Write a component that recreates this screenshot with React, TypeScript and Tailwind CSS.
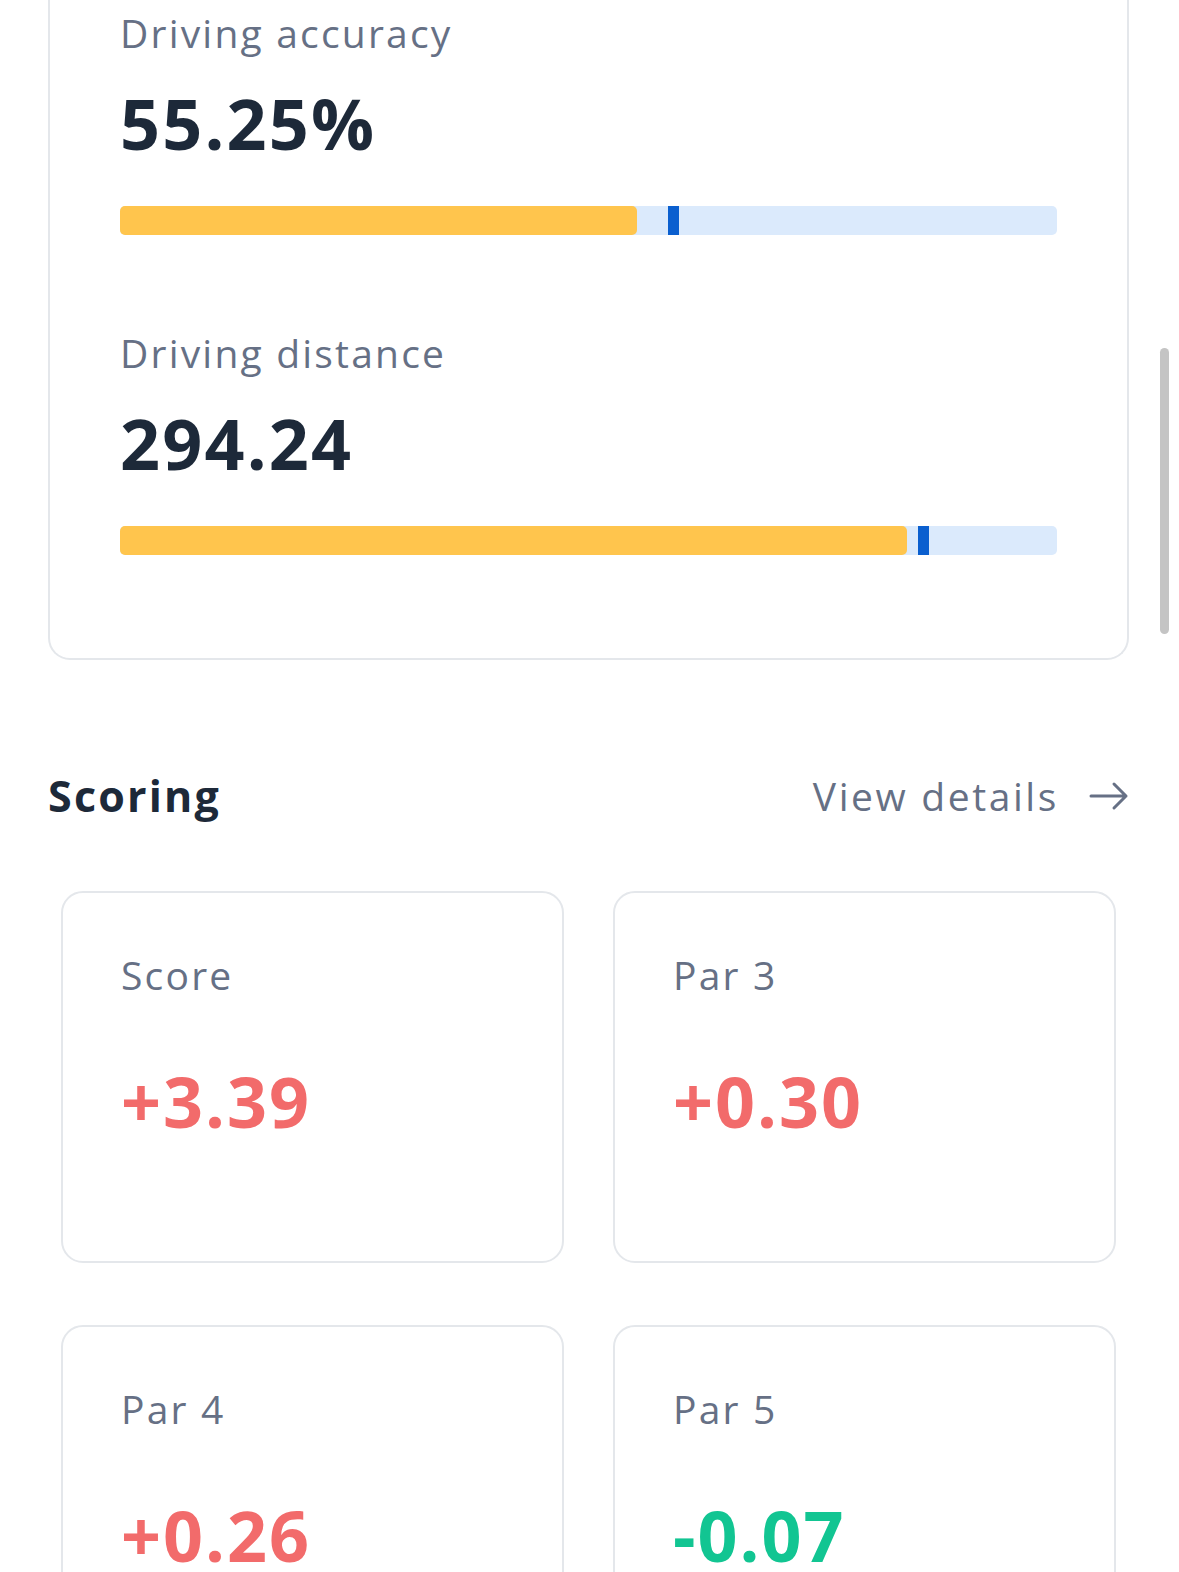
import React from "react";

type Metric = {
  label: string;
  value: string;
  fill: number; // px width of yellow bar
  marker: number; // px offset of the tour average marker
};

const driving: Metric[] = [
  { label: "Driving accuracy", value: "55.25%", fill: 517, marker: 548 },
  { label: "Driving distance", value: "294.24", fill: 787, marker: 798 },
];

const scoring = [
  { label: "Score", value: "+3.39", good: false },
  { label: "Par 3", value: "+0.30", good: false },
  { label: "Par 4", value: "+0.26", good: false },
  { label: "Par 5", value: "-0.07", good: true },
];

function StatBar({ fill, marker }: { fill: number; marker: number }) {
  return (
    <div className="relative h-[29px] w-full rounded-[5px] bg-[#dbeafc]">
      <div
        className="h-full rounded-[5px] bg-[#ffc54d]"
        style={{ width: fill }}
      />
      <div
        className="absolute top-0 h-full w-[11px] bg-[#0a5fcf]"
        style={{ left: marker }}
      />
    </div>
  );
}

function ArrowRight() {
  return (
    <svg width="40" height="30" viewBox="0 0 40 30" fill="none">
      <path
        d="M2 15h35M25 3l12 12-12 12"
        stroke="#667085"
        strokeWidth="3"
        strokeLinecap="round"
        strokeLinejoin="round"
      />
    </svg>
  );
}

export default function App() {
  return (
    <div className="relative h-[1572px] overflow-hidden bg-white pl-[48px] pr-[50px] font-['Open_Sans',sans-serif]">
      {/* Driving card (top is scrolled off) */}
      <div className="rounded-b-[22px] border-2 border-t-0 border-[#e4e7eb] px-[70px] pb-[103px] pt-[9px]">
        {driving.map((m, i) => (
          <div key={m.label} className={i > 0 ? "mt-[94px]" : ""}>
            <div className="text-[39px] leading-[48px] tracking-[2.2px] text-[#667085]">
              {m.label}
            </div>
            <div className="mt-[26px] text-[70px] font-bold leading-[80px] tracking-[2.2px] text-[#1d2939]">
              {m.value}
            </div>
            <div className="mt-[43px]">
              <StatBar fill={m.fill} marker={m.marker} />
            </div>
          </div>
        ))}
      </div>

      {/* Scoring */}
      <div className="mt-[112px] flex items-center justify-between">
        <h2 className="text-[43px] font-bold leading-[48px] tracking-[2.2px] text-[#1d2939]">
          Scoring
        </h2>
        <button className="flex items-center gap-[30px] text-[39px] leading-[48px] tracking-[2.6px] text-[#667085]">
          View details
          <ArrowRight />
        </button>
      </div>

      <div className="mt-[71px] grid grid-cols-2 gap-x-[49px] gap-y-[62px] px-[13px]">
        {scoring.map((s) => (
          <div
            key={s.label}
            className="h-[372px] rounded-[22px] border-2 border-[#e4e7eb] pl-[58px] pt-[58px]"
          >
            <div className="text-[39px] leading-[48px] tracking-[2.2px] text-[#667085]">
              {s.label}
            </div>
            <div
              className={
                "mt-[62px] text-[70px] font-bold leading-[80px] tracking-[2px] " +
                (s.good ? "text-[#12c592]" : "text-[#f26b6b]")
              }
            >
              {s.value}
            </div>
          </div>
        ))}
      </div>

      {/* overlay scrollbar */}
      <div className="absolute left-[1160px] top-[348px] h-[286px] w-[9px] rounded-full bg-[#c4c4c4]" />
    </div>
  );
}
